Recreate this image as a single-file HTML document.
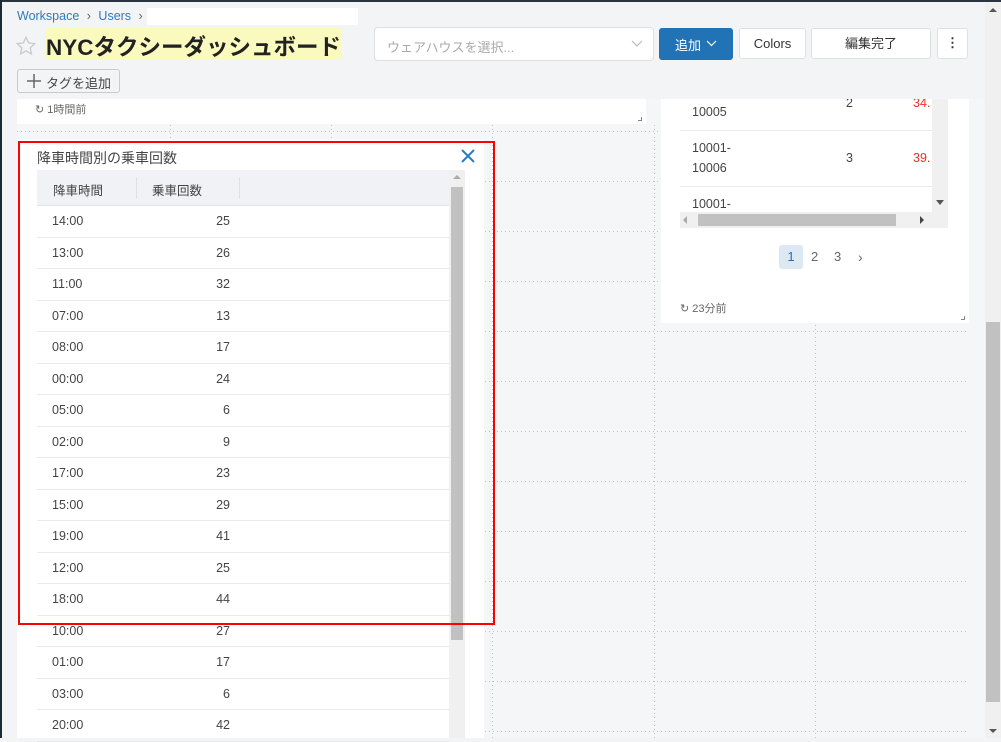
<!DOCTYPE html>
<html><head><meta charset="utf-8"><style>
*{box-sizing:border-box;margin:0;padding:0}
body{width:1001px;height:738px;overflow:hidden;background:#f3f4f6;font-family:"Liberation Sans","Noto Sans CJK JP",sans-serif;position:relative;color:#333}
.a{position:absolute}
.hl{position:absolute;left:17px;width:952px;height:1px;background:repeating-linear-gradient(90deg,#c0c4c9 0 1px,transparent 1px 4px)}
.vl{position:absolute;top:124px;height:614px;width:1px;background:repeating-linear-gradient(0deg,#c0c4c9 0 1px,transparent 1px 4px)}
.btn{position:absolute;background:#fff;border:1px solid #dde0e4;border-radius:3px;font-size:13px;text-align:center;color:#333}
.row{position:absolute;left:37px;width:412px;height:31.5px;border-bottom:1px solid #e8e9eb;font-size:12.5px;color:#444}
.row .t{position:absolute;left:15px;top:8px}
.row .n{position:absolute;right:219px;top:8px}
</style></head><body>
<div class="a" style="left:0;top:0;width:1001px;height:2px;background:#2a3540"></div>
<div class="a" style="left:0;top:0;width:2px;height:738px;background:#1e2a35"></div>

<div class="a" style="left:17px;top:9px;font-size:12.5px;color:#2b7bc0">Workspace <span style="color:#666;margin:0 4px">›</span> Users <span style="color:#666;margin-left:4px">›</span></div>
<div class="a" style="left:147px;top:8px;width:211px;height:17px;background:#fff"></div>
<svg class="a" style="left:15px;top:35px" width="22" height="22" viewBox="0 0 24 24"><path d="M12 2.5l2.9 6.1 6.6.8-4.9 4.6 1.3 6.6L12 17.3l-5.9 3.3 1.3-6.6-4.9-4.6 6.6-.8z" fill="none" stroke="#c8ccd0" stroke-width="1.5"/></svg>
<div class="a" style="left:45px;top:28px;width:297px;height:31px;background:#fafabf;border-radius:2px"></div>
<div class="a" style="left:46px;top:30px;font-size:22.5px;font-weight:bold;color:#222">NYCタクシーダッシュボード</div>
<div class="a" style="left:374px;top:27px;width:280px;height:34px;background:#fff;border:1px solid #dde0e4;border-radius:4px"><span class="a" style="left:12px;top:9px;font-size:13px;color:#aaa">ウェアハウスを選択...</span>
<svg class="a" style="left:256px;top:12px" width="12" height="8"><path d="M1 1l5 5 5-5" fill="none" stroke="#bbb" stroke-width="1.2"/></svg></div>
<div class="a" style="left:659px;top:28px;width:74px;height:32px;background:#2272b6;border-radius:3px;color:#fff;font-size:13px"><span class="a" style="left:16px;top:7px">追加</span><svg class="a" style="left:47px;top:12px" width="11" height="7"><path d="M1 1l4.5 4.5L10 1" fill="none" stroke="#fff" stroke-width="1.2"/></svg></div>
<div class="btn" style="left:739px;top:28px;width:67px;height:31px;line-height:29px">Colors</div>
<div class="btn" style="left:811px;top:28px;width:120px;height:31px;line-height:29px">編集完了</div>
<div class="btn" style="left:937px;top:28px;width:31px;height:31px;line-height:27px;font-weight:bold">⋮</div>
<div class="a" style="left:17px;top:69px;width:103px;height:24px;border:1px solid #c6cbd1;border-radius:3px;background:#f3f4f6;font-size:13px;color:#444"><svg class="a" style="left:9px;top:4px" width="14" height="14"><path d="M7 0v14M0 7h14" stroke="#666" stroke-width="1.5"/></svg><span class="a" style="left:28px;top:3px">タグを追加</span></div>

<div class="a" style="left:17px;top:99px;width:968px;height:639px;background:#f5f6f8"></div>
<div class="hl" style="top:131px"></div><div class="hl" style="top:181px"></div><div class="hl" style="top:231px"></div><div class="hl" style="top:281px"></div><div class="hl" style="top:331px"></div><div class="hl" style="top:381px"></div><div class="hl" style="top:431px"></div><div class="hl" style="top:481px"></div><div class="hl" style="top:531px"></div><div class="hl" style="top:581px"></div><div class="hl" style="top:631px"></div><div class="hl" style="top:681px"></div><div class="hl" style="top:731px"></div>
<div class="vl" style="left:170px"></div><div class="vl" style="left:331px"></div><div class="vl" style="left:492px"></div><div class="vl" style="left:654px"></div><div class="vl" style="left:815px"></div>

<div class="a" style="left:17px;top:99px;width:629px;height:25px;background:#fff"><span class="a" style="left:18px;top:2px;font-size:11px;color:#666">↻ 1時間前</span><span class="a" style="right:4px;bottom:3px;width:4px;height:4px;border-right:1px solid #888;border-bottom:1px solid #888"></span></div>

<div class="a" style="left:661px;top:99px;width:308px;height:224px;background:#fff">
<div class="a" style="left:19px;top:0;width:252px;height:113px;overflow:hidden;font-size:12.5px;color:#444">
<span class="a" style="left:12px;top:6px">10005</span><span class="a" style="left:166px;top:-3px">2</span><span class="a" style="left:233px;top:-3px;color:#e8302a">34.</span>
<div class="a" style="left:0;top:31px;width:252px;height:1px;background:#e8e9eb"></div>
<span class="a" style="left:12px;top:42px">10001-</span><span class="a" style="left:12px;top:62px">10006</span><span class="a" style="left:166px;top:52px">3</span><span class="a" style="left:233px;top:52px;color:#e8302a">39.</span>
<div class="a" style="left:0;top:87px;width:252px;height:1px;background:#e8e9eb"></div>
<span class="a" style="left:12px;top:98px">10001-</span>
</div>
<div class="a" style="left:271px;top:0;width:16px;height:129px;background:#f0f0f0"><span class="a" style="left:4px;top:101px;border:4px solid transparent;border-top:5px solid #555"></span></div>
<div class="a" style="left:19px;top:113px;width:252px;height:16px;background:#f0f0f0"><div class="a" style="left:18px;top:2px;width:198px;height:12px;background:#c1c1c1"></div><span class="a" style="left:3px;top:4px;border:4px solid transparent;border-right:4px solid #aaa;border-left:0"></span><span class="a" style="left:240px;top:4px;border:4px solid transparent;border-left:4px solid #444;border-right:0"></span></div>
<div class="a" style="left:118px;top:146px;width:24px;height:24px;background:#dce8f3;border-radius:3px;text-align:center;line-height:24px;font-size:13px;color:#2b6ea8">1</div>
<span class="a" style="left:150px;top:150px;font-size:13px;color:#666">2</span><span class="a" style="left:173px;top:150px;font-size:13px;color:#666">3</span><span class="a" style="left:197px;top:150px;font-size:14px;color:#666">›</span>
<span class="a" style="left:19px;top:201px;font-size:11px;color:#666">↻ 23分前</span>
<span class="a" style="right:4px;bottom:3px;width:4px;height:4px;border-right:1px solid #888;border-bottom:1px solid #888"></span>
</div>

<div class="a" style="left:17px;top:140px;width:467px;height:598px;background:#fff"></div>
<div class="a" style="left:37px;top:148px;font-size:14px;color:#444">降車時間別の乗車回数</div>
<svg class="a" style="left:460px;top:148px" width="16" height="16"><path d="M2 2l12 12M14 2L2 14" stroke="#2b7bc0" stroke-width="2"/></svg>
<div class="a" style="left:37px;top:170px;width:412px;height:36px;background:#f0f2f5;border-bottom:1px solid #e3e5e8;font-size:12.5px;color:#444"><span class="a" style="left:16px;top:10px">降車時間</span><span class="a" style="left:99px;top:7px;width:1px;height:22px;background:#dde0e4"></span><span class="a" style="left:115px;top:10px">乗車回数</span><span class="a" style="left:202px;top:7px;width:1px;height:22px;background:#dde0e4"></span></div>
<div class="a" style="left:449px;top:170px;width:16px;height:568px;background:#f0f0f0"><span class="a" style="left:4px;top:5px;border:4px solid transparent;border-bottom:4px solid #aaa;border-top:0"></span><div class="a" style="left:2px;top:17px;width:12px;height:453px;background:#c1c1c1"></div></div>
<div class="row" style="top:206px"><span class="t">14:00</span><span class="n">25</span></div>
<div class="row" style="top:237.5px"><span class="t">13:00</span><span class="n">26</span></div>
<div class="row" style="top:269px"><span class="t">11:00</span><span class="n">32</span></div>
<div class="row" style="top:300.5px"><span class="t">07:00</span><span class="n">13</span></div>
<div class="row" style="top:332px"><span class="t">08:00</span><span class="n">17</span></div>
<div class="row" style="top:363.5px"><span class="t">00:00</span><span class="n">24</span></div>
<div class="row" style="top:395px"><span class="t">05:00</span><span class="n">6</span></div>
<div class="row" style="top:426.5px"><span class="t">02:00</span><span class="n">9</span></div>
<div class="row" style="top:458px"><span class="t">17:00</span><span class="n">23</span></div>
<div class="row" style="top:489.5px"><span class="t">15:00</span><span class="n">29</span></div>
<div class="row" style="top:521px"><span class="t">19:00</span><span class="n">41</span></div>
<div class="row" style="top:552.5px"><span class="t">12:00</span><span class="n">25</span></div>
<div class="row" style="top:584px"><span class="t">18:00</span><span class="n">44</span></div>
<div class="row" style="top:615.5px"><span class="t">10:00</span><span class="n">27</span></div>
<div class="row" style="top:647px"><span class="t">01:00</span><span class="n">17</span></div>
<div class="row" style="top:678.5px"><span class="t">03:00</span><span class="n">6</span></div>
<div class="row" style="top:710px"><span class="t">20:00</span><span class="n">42</span></div>
<div class="a" style="left:18px;top:141px;width:477px;height:484px;border:2px solid #ff0000"></div>

<div class="a" style="left:985px;top:2px;width:16px;height:736px;background:#f0f0f0"><span class="a" style="left:4px;top:6px;border:4px solid transparent;border-bottom:4px solid #555;border-top:0"></span><div class="a" style="left:1px;top:320px;width:14px;height:380px;background:#c1c1c1"></div><span class="a" style="left:4px;top:727px;border:4px solid transparent;border-top:4px solid #555;border-bottom:0"></span></div>
</body></html>
